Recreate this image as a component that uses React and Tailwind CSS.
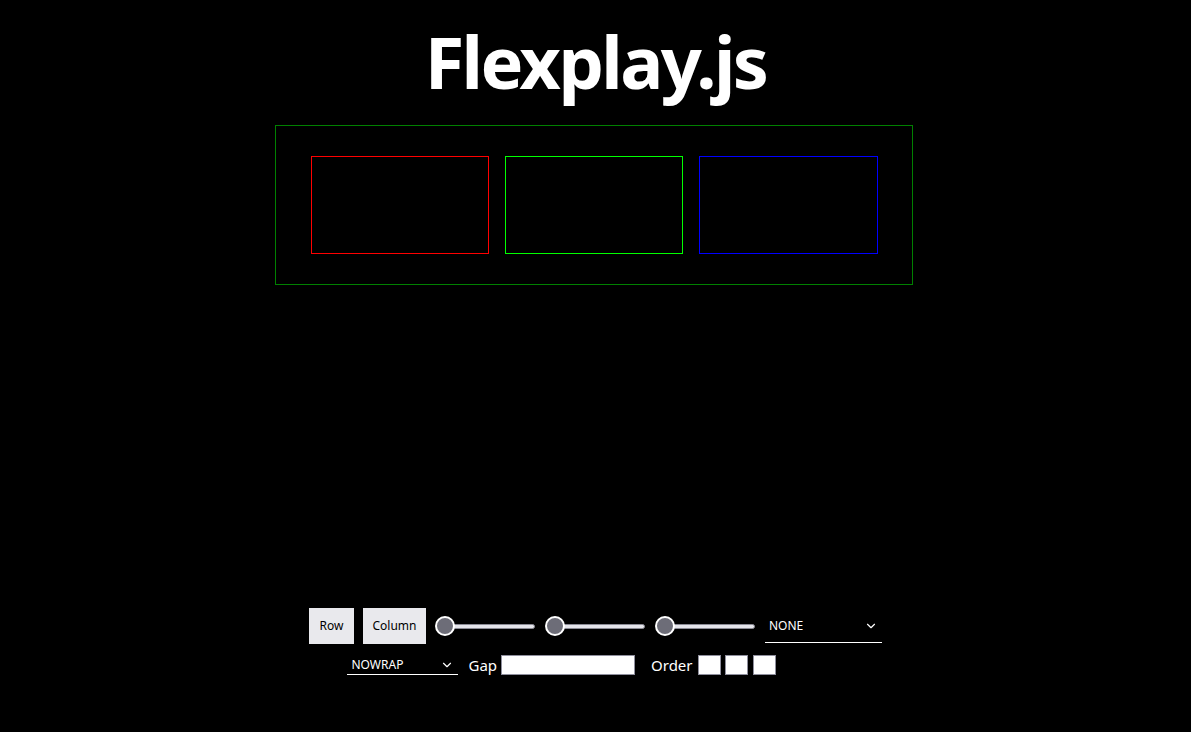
import { ChevronDown } from 'lucide-react'

const Slider = () => {
  return (
    <div className="relative w-[101px] h-[22px] flex items-center">
      {/* track */}
      <div className="ml-[10px] w-[90px] h-[5px] rounded-full bg-[#e4e4ea] border border-[#8a8a94]" />
      {/* thumb */}
      <div className="absolute left-0 top-[1px] w-[20px] h-[20px] rounded-full bg-[#6d6d78] border-2 border-white" />
    </div>
  )
}

const Select = ({ value, width, height, text }) => {
  return (
    <div className={`flex items-center justify-between border-b border-white pl-[4px] pr-[4px] ${width} ${height}`}>
      <span className={`text-white ${text}`}>{value}</span>
      <ChevronDown className="w-[14px] h-[14px] text-white" strokeWidth={2} />
    </div>
  )
}

export default function App() {
  return (
    <div className="min-h-screen bg-black text-white font-['Noto_Sans','Open_Sans',sans-serif]">
      <h1 className="pt-[25px] text-center text-[72px] leading-none font-bold tracking-[-2.6px]">
        Flexplay.js
      </h1>

      {/* 容器 */}
      <div className="mt-[28px] flex justify-center pr-[3px]">
        <div className="w-[638px] h-[160px] border border-[#008000] flex justify-center gap-[16px] pt-[30px]">
          <div className="w-[178px] h-[98px] border border-[#ff0000]" />
          <div className="w-[178px] h-[98px] border border-[#00ff00]" />
          <div className="w-[179px] h-[98px] border border-[#0000ff]" />
        </div>
      </div>

      {/* 控制区 */}
      <div className="mt-[323px] flex items-center justify-center gap-[9px]">
        <button className="w-[45px] h-[36px] bg-[#e9e9ed] text-black text-[12px]">Row</button>
        <button className="w-[63px] h-[36px] bg-[#e9e9ed] text-black text-[12px]">Column</button>
        <Slider />
        <Slider />
        <Slider />
        <Select value="NONE" width="w-[117px]" height="h-[34px]" text="text-[12px]" />
      </div>

      <div className="mt-[10px] flex items-center justify-center pr-[68px]">
        <Select value="NOWRAP" width="w-[111px]" height="h-[20px]" text="text-[12px]" />
        <span className="ml-[10px] text-[15px]">Gap</span>
        <input className="ml-[4px] w-[134px] h-[20px] bg-white border border-[#8f8f9d]" />
        <span className="ml-[16px] text-[15px]">Order</span>
        <input className="ml-[5px] w-[23px] h-[20px] bg-white border border-[#8f8f9d]" />
        <input className="ml-[4px] w-[23px] h-[20px] bg-white border border-[#8f8f9d]" />
        <input className="ml-[5px] w-[23px] h-[20px] bg-white border border-[#8f8f9d]" />
      </div>
    </div>
  )
}
